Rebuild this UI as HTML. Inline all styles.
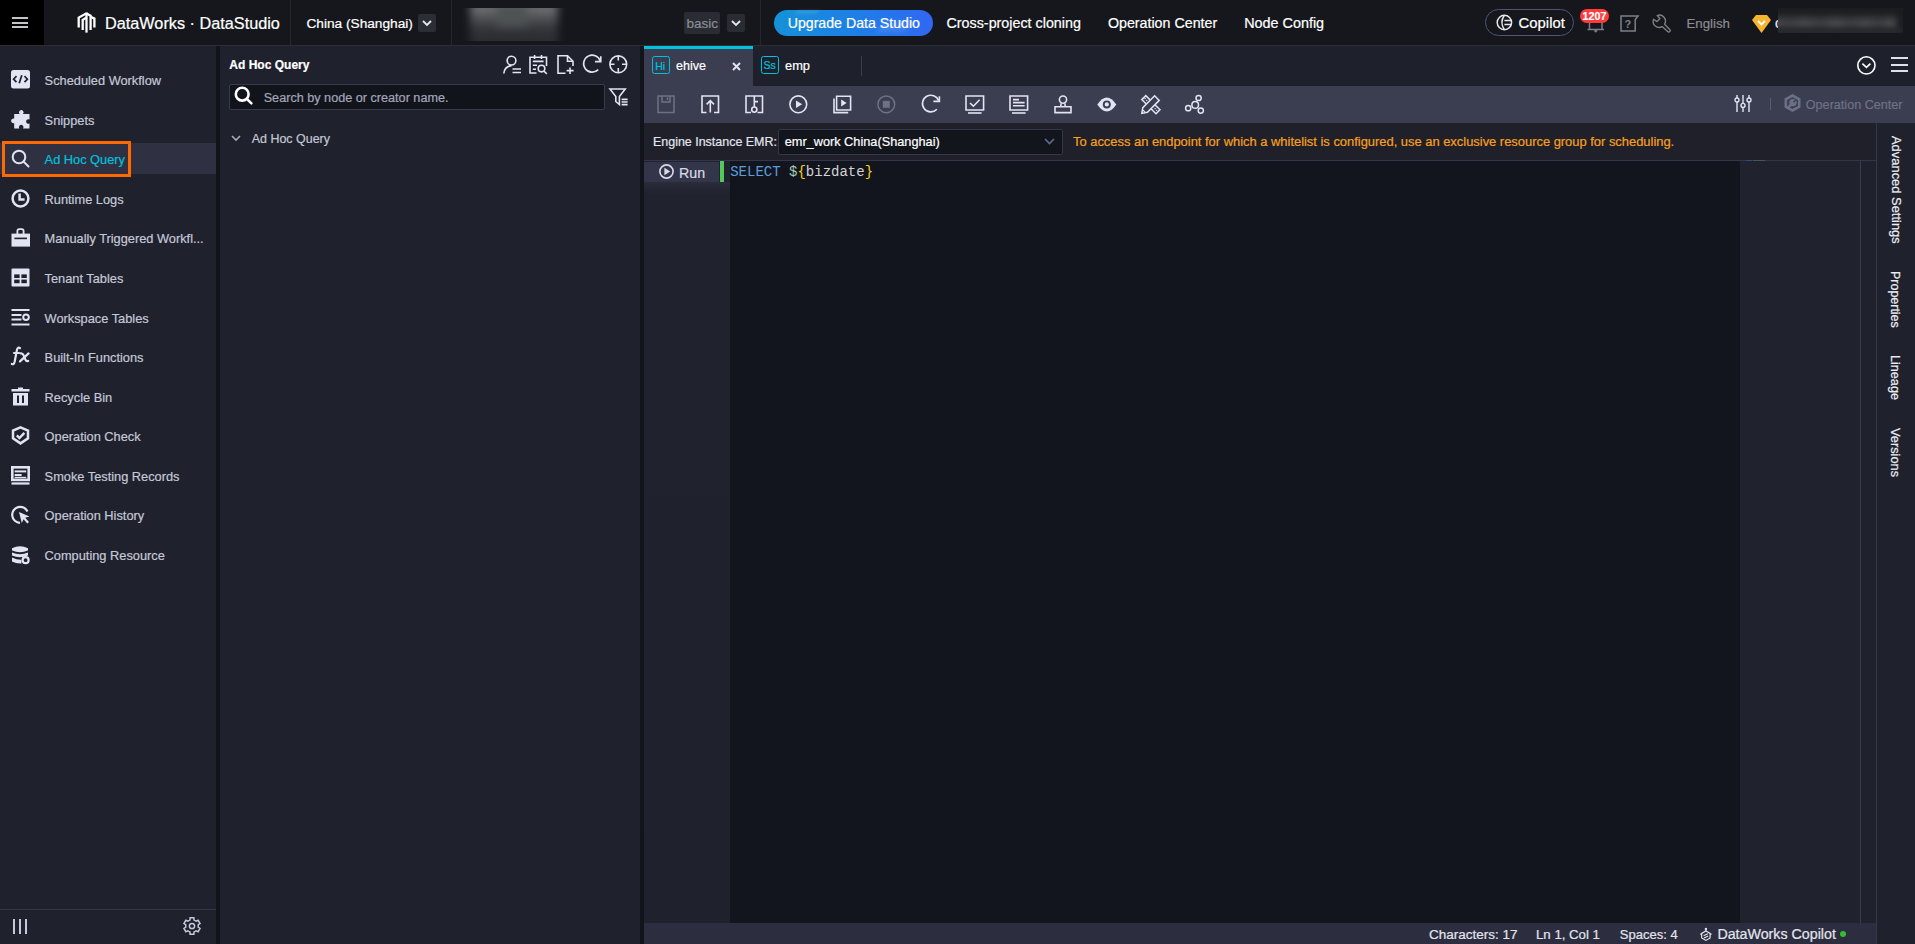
<!DOCTYPE html>
<html><head><meta charset="utf-8">
<style>
*{box-sizing:border-box;margin:0;padding:0}
html,body{width:1915px;height:944px;overflow:hidden;background:#1f212c;font-family:"Liberation Sans",sans-serif}
.a{position:absolute}
svg.a{display:block;overflow:visible}
.t{position:absolute;white-space:nowrap;line-height:1;-webkit-text-stroke:0.2px currentColor}
</style></head><body>
<div class="a" style="left:0px;top:0px;width:1915px;height:45px;background:#15171c;"></div>
<div class="a" style="left:0px;top:45px;width:1915px;height:1px;background:#2c2e33;"></div>
<div class="a" style="left:0px;top:0px;width:44px;height:45px;background:#000000;"></div>
<div class="a" style="left:12px;top:17px;width:16px;height:2px;background:#c2c4c9;"></div>
<div class="a" style="left:12px;top:21.5px;width:16px;height:2px;background:#c2c4c9;"></div>
<div class="a" style="left:12px;top:26px;width:16px;height:2px;background:#c2c4c9;"></div>
<svg class="a" style="left:72px;top:8px;" width="30" height="30" viewBox="0 0 30 30"><g fill="none" stroke="#ffffff" stroke-width="2.3" stroke-linejoin="miter" stroke-linecap="butt">
<path d="M6.7 19.6 V9.6 L14.2 5.6"/><path d="M10.7 22 V11.8 L14.2 9.8"/><path d="M14.5 24.6 V4.6"/><path d="M14.2 5.4 L18.6 7.6 V22"/><path d="M18.6 8.8 L22.4 10.6 V19.6"/></g></svg>
<div class="t" style="left:105px;top:15px;font-size:16.26px;color:#ffffff;font-weight:normal;">DataWorks · DataStudio</div>
<div class="a" style="left:290px;top:0px;width:1px;height:45px;background:#25272c;"></div>
<div class="t" style="left:306.4px;top:17px;font-size:13.7px;color:#ffffff;font-weight:normal;">China (Shanghai)</div>
<div class="a" style="left:418px;top:14px;width:18px;height:18px;background:#2c2e36;border-radius:2px;"></div>
<svg class="a" style="left:422px;top:19px;" width="10" height="8" viewBox="0 0 10 8"><path d="M1 2 L5 6 L9 2" fill="none" stroke="#e8e8ea" stroke-width="1.8"/></svg>
<div class="a" style="left:451px;top:0px;width:1px;height:45px;background:#25272c;"></div>
<div class="a" style="left:462px;top:8px;width:105px;height:33px;overflow:hidden"><div class="a" style="left:8px;top:-6px;width:88px;height:45px;background:linear-gradient(180deg,#747378 0%,#6a6a6e 18%,#4a4b4f 40%,#303236 62%,#2a2c30 100%);filter:blur(4px)"></div><div class="a" style="left:35px;top:-4px;width:30px;height:22px;background:#4e5254;filter:blur(5px)"></div></div>
<div class="a" style="left:684px;top:12px;width:36px;height:22px;background:#2a2c33;border-radius:2px;"></div>
<div class="t" style="left:686.6px;top:17px;font-size:13.48px;color:#8b8d93;font-weight:normal;">basic</div>
<div class="a" style="left:727px;top:14px;width:18px;height:18px;background:#2a2c33;border-radius:2px;"></div>
<svg class="a" style="left:731px;top:19px;" width="10" height="8" viewBox="0 0 10 8"><path d="M1 2 L5 6 L9 2" fill="none" stroke="#e8e8ea" stroke-width="1.8"/></svg>
<div class="a" style="left:760px;top:0px;width:1px;height:45px;background:#25272c;"></div>
<div class="a" style="left:774px;top:10px;width:159px;height:26px;background:linear-gradient(90deg,#1592d8 0%,#1e7fe6 50%,#3068f2 100%);border-radius:13px;"></div>
<div class="a" style="left:796px;top:10px;width:22px;height:4px;background:rgba(255,255,255,0.10);transform:skewX(-30deg);filter:blur(1.5px);"></div>
<div class="a" style="left:880px;top:22px;width:28px;height:10px;background:rgba(255,255,255,0.10);transform:skewX(-35deg);filter:blur(2px);"></div>
<div class="t" style="left:787.7px;top:16px;font-size:14.16px;color:#ffffff;font-weight:normal;">Upgrade Data Studio</div>
<div class="t" style="left:946.5px;top:16px;font-size:14.32px;color:#ffffff;font-weight:normal;">Cross-project cloning</div>
<div class="t" style="left:1107.9px;top:16px;font-size:14.26px;color:#ffffff;font-weight:normal;">Operation Center</div>
<div class="t" style="left:1244.2px;top:16px;font-size:14.39px;color:#ffffff;font-weight:normal;">Node Config</div>
<div class="a" style="left:1485px;top:9px;width:89px;height:27px;background:transparent;border:1.3px solid #4d5478;border-radius:14px;"></div>
<svg class="a" style="left:1496px;top:14px;" width="17" height="17" viewBox="0 0 17 17"><g fill="none" stroke="#e6e7ea" stroke-width="1.5"><circle cx="8.4" cy="8.5" r="7.2"/><path d="M8.4 6.4 H15.4 M8.4 10.6 H15.4"/><path d="M8.4 1.3 Q3.4 8.5 8.4 15.7"/></g></svg>
<div class="t" style="left:1518.6px;top:16px;font-size:14.86px;color:#ffffff;font-weight:normal;">Copilot</div>
<svg class="a" style="left:1587px;top:20px;" width="18" height="12" viewBox="0 0 18 12"><g fill="none" stroke="#7d7f88" stroke-width="1.5"><path d="M2.5 0 V9.6 M15 0 V9.6 M0.5 9.6 H17"/><path d="M7.6 10.4 L8.8 11.6 L10 10.4"/></g></svg>
<div class="a" style="left:1580.4px;top:8.7px;width:28.5px;height:14.3px;background:#ff3b3b;border-radius:7.2px;"></div>
<div class="t" style="left:1582.6px;top:11px;font-size:10.7px;color:#ffffff;font-weight:bold;">1207</div>
<svg class="a" style="left:1619.5px;top:14.5px;" width="19" height="17" viewBox="0 0 19 17"><g fill="none" stroke="#7d7f88" stroke-width="1.5"><path d="M1 1 H18 L15.2 4.6 V16 H1 Z"/></g><text x="4.6" y="13" font-family="Liberation Sans" font-weight="bold" font-size="11" fill="#7d7f88">?</text></svg>
<svg class="a" style="left:1652px;top:14px;" width="19" height="19" viewBox="0 0 19 19"><path fill="none" stroke="#7d7f88" stroke-width="1.4" stroke-linejoin="round" d="M1.6 5.2 A6 6 0 0 0 10.2 12.6 L15.6 17.6 A1.5 1.5 0 0 0 17.8 15.4 L12.6 10.2 A6 6 0 0 0 5.2 1.6 L8 4.6 L5 7.6 Z"/></svg>
<div class="t" style="left:1686.5px;top:17px;font-size:13.26px;color:#8b8d93;font-weight:normal;">English</div>
<svg class="a" style="left:1752px;top:15px;" width="19" height="18" viewBox="0 0 19 18"><path d="M4 0 H15 L19 5 L9.5 18 L0 5 Z" fill="#f6b52e"/><path d="M6 6 L9.5 9.5 L13 6" fill="none" stroke="#fff" stroke-width="1.8"/></svg>
<div class="a" style="left:1771px;top:14px;width:7px;height:18px;overflow:hidden"><div class="t" style="left:4px;top:2px;font-size:14px;color:#e8f2ff">c</div></div>
<div class="a" style="left:1778px;top:8px;width:125px;height:25px;overflow:hidden;background:#1c1d21"><div class="a" style="left:-8px;top:9px;width:126px;height:13px;background:linear-gradient(90deg,#4a4a4e 0%,#3c3d40 15%,#46474a 28%,#3a3b3e 40%,#48494c 52%,#3b3c3f 64%,#46474a 76%,#3a3b3e 86%,#4a4a4d 96%);filter:blur(3.5px)"></div><div class="a" style="left:0;top:20px;width:125px;height:5px;background:#28292c;filter:blur(2px)"></div></div>
<div class="a" style="left:0px;top:46px;width:216px;height:898px;background:#1f212c;"></div>
<div class="a" style="left:216px;top:46px;width:4px;height:898px;background:#12141b;"></div>
<div class="a" style="left:220px;top:46px;width:420px;height:898px;background:#1f212c;"></div>
<div class="a" style="left:640px;top:46px;width:4px;height:898px;background:#12141b;"></div>
<div class="a" style="left:0px;top:143px;width:216px;height:31px;background:#2f3142;"></div>
<svg class="a" style="left:11px;top:70px;" width="19" height="19" viewBox="0 0 19 19"><rect x="0" y="0" width="19" height="18.5" rx="2.5" fill="#e1e4f2"/><g fill="none" stroke="#1f212c" stroke-width="1.7"><path d="M5.5 6.2 L2.6 9.2 L5.5 12.2"/><path d="M13.5 6.2 L16.4 9.2 L13.5 12.2"/><path d="M10.8 5.2 L8.2 13.2"/></g></svg>
<div class="t" style="left:44.6px;top:75px;font-size:12.81px;color:#c5c8d8;font-weight:normal;">Scheduled Workflow</div>
<svg class="a" style="left:11px;top:110px;" width="19" height="19" viewBox="0 0 19 19"><path fill="#e1e4f2" d="M6 4 H8.6 A2.3 2.3 0 1 1 12 4 H18.5 V9.5 A2.3 2.3 0 1 0 18.5 13.6 V18.5 H12 A2.3 2.3 0 1 0 8.4 18.5 H3.2 V13.2 A2.4 2.4 0 1 1 3.2 8.6 V4 Z"/></svg>
<div class="t" style="left:44.6px;top:115px;font-size:12.81px;color:#c5c8d8;font-weight:normal;">Snippets</div>
<svg class="a" style="left:11px;top:149px;" width="19" height="19" viewBox="0 0 19 19"><g fill="none" stroke="#e1e4f2" stroke-width="2"><circle cx="8" cy="8" r="6.3"/><path d="M12.6 12.6 L17.5 17.5" stroke-linecap="round"/></g></svg>
<div class="t" style="left:44.6px;top:154px;font-size:12.81px;color:#00c1de;font-weight:normal;">Ad Hoc Query</div>
<svg class="a" style="left:11px;top:189px;" width="19" height="19" viewBox="0 0 19 19"><g fill="none" stroke="#e1e4f2" stroke-width="2.5"><circle cx="9.5" cy="9.5" r="7.9"/><path d="M8.6 4.6 V10.4 H13.6"/></g></svg>
<div class="t" style="left:44.6px;top:194px;font-size:12.81px;color:#c5c8d8;font-weight:normal;">Runtime Logs</div>
<svg class="a" style="left:11px;top:228px;" width="19" height="19" viewBox="0 0 19 19"><path fill="none" stroke="#e1e4f2" stroke-width="1.8" d="M6.4 6 V3 Q6.4 1.2 8.2 1.2 H10.8 Q12.6 1.2 12.6 3 V6"/><rect x="0.5" y="5.6" width="18.5" height="13" fill="#e1e4f2"/><rect x="3.4" y="9.6" width="12.6" height="1.6" fill="#1f212c"/></svg>
<div class="t" style="left:44.6px;top:233px;font-size:12.81px;color:#c5c8d8;font-weight:normal;">Manually Triggered Workfl...</div>
<svg class="a" style="left:11px;top:268px;" width="19" height="19" viewBox="0 0 19 19"><rect x="0.5" y="0.5" width="18" height="18" rx="1" fill="#e1e4f2"/><g fill="#1f212c"><rect x="3.2" y="6.4" width="5.4" height="3.6"/><rect x="10.4" y="6.4" width="5.4" height="3.6"/><rect x="3.2" y="11.6" width="5.4" height="3.6"/><rect x="10.4" y="11.6" width="5.4" height="3.6"/></g></svg>
<div class="t" style="left:44.6px;top:273px;font-size:12.81px;color:#c5c8d8;font-weight:normal;">Tenant Tables</div>
<svg class="a" style="left:11px;top:308px;" width="19" height="19" viewBox="0 0 19 19"><g fill="#e1e4f2"><rect x="0.5" y="1" width="18" height="2"/><rect x="0.5" y="6" width="10" height="2"/><rect x="0.5" y="10.5" width="10" height="2"/><rect x="0.5" y="15.5" width="18" height="2"/></g><circle cx="15" cy="9.3" r="2.8" fill="none" stroke="#e1e4f2" stroke-width="2"/></svg>
<div class="t" style="left:44.6px;top:313px;font-size:12.81px;color:#c5c8d8;font-weight:normal;">Workspace Tables</div>
<svg class="a" style="left:11px;top:347px;" width="19" height="19" viewBox="0 0 19 19"><g fill="none" stroke="#e1e4f2" stroke-width="2.2" stroke-linecap="round"><path d="M9 1.2 Q7 -0.4 6 2.6 L3.6 15 Q2.8 18 0.8 17"/><path d="M3 6 H8"/><path d="M9.6 6.4 Q11.6 6 12.6 8.4 L14.4 12.6 Q15.2 14.6 17.2 14"/><path d="M17.6 6.4 L9 14.4"/></g></svg>
<div class="t" style="left:44.6px;top:352px;font-size:12.81px;color:#c5c8d8;font-weight:normal;">Built-In Functions</div>
<svg class="a" style="left:11px;top:387px;" width="19" height="19" viewBox="0 0 19 19"><path fill="#e1e4f2" d="M7 0.5 H12 V2 H18.5 V4.5 H0.5 V2 H7 Z M2 6 H17 V18.5 H2 Z"/><g fill="#1f212c"><rect x="6" y="8.5" width="2" height="7.5"/><rect x="11" y="8.5" width="2" height="7.5"/></g></svg>
<div class="t" style="left:44.6px;top:392px;font-size:12.81px;color:#c5c8d8;font-weight:normal;">Recycle Bin</div>
<svg class="a" style="left:11px;top:426px;" width="19" height="19" viewBox="0 0 19 19"><path fill="none" stroke="#e1e4f2" stroke-width="2.5" d="M9.5 1.4 L17 4.6 V12.4 L9.5 17.4 L2 12.4 V4.6 Z"/><path d="M5.8 9.4 L8.4 12 L13.4 6.8" fill="none" stroke="#e1e4f2" stroke-width="2.4"/></svg>
<div class="t" style="left:44.6px;top:431px;font-size:12.81px;color:#c5c8d8;font-weight:normal;">Operation Check</div>
<svg class="a" style="left:11px;top:466px;" width="19" height="19" viewBox="0 0 19 19"><rect x="1.3" y="1.3" width="16.4" height="12.6" fill="none" stroke="#e1e4f2" stroke-width="2.6"/><rect x="0.5" y="16.4" width="18" height="2.2" fill="#e1e4f2"/><g fill="#e1e4f2"><rect x="3.6" y="4.4" width="11.6" height="2"/><rect x="3.6" y="8" width="7" height="2"/><rect x="3.6" y="10.8" width="11.6" height="1.4"/></g></svg>
<div class="t" style="left:44.6px;top:471px;font-size:12.81px;color:#c5c8d8;font-weight:normal;">Smoke Testing Records</div>
<svg class="a" style="left:11px;top:505px;" width="19" height="19" viewBox="0 0 19 19"><path fill="none" stroke="#e1e4f2" stroke-width="2.2" d="M16.5 6.5 A8 8 0 1 0 9 17.8"/><path fill="#e1e4f2" d="M8 7 L18.5 11.5 L14.2 12.8 L18 17 L16.3 18.6 L12.6 14.3 L10.8 18 Z"/></svg>
<div class="t" style="left:44.6px;top:510px;font-size:12.81px;color:#c5c8d8;font-weight:normal;">Operation History</div>
<svg class="a" style="left:11px;top:545px;" width="19" height="19" viewBox="0 0 19 19"><g fill="#e1e4f2"><path d="M1 3.2 Q9 -0.8 17 3.2 V5.4 Q9 9 1 5.4 Z"/><path d="M1 7.4 Q9 11 17 7.4 V10.6 Q9 14 1 10.6 Z"/><path d="M1 12.6 Q6 15 10.4 14.8 V18.4 Q5 18.6 1 16.4 Z"/></g><circle cx="14.6" cy="15.2" r="3" fill="#1f212c" stroke="#e1e4f2" stroke-width="2.2"/></svg>
<div class="t" style="left:44.6px;top:550px;font-size:12.81px;color:#c5c8d8;font-weight:normal;">Computing Resource</div>
<div class="a" style="left:2px;top:141px;width:129px;height:36px;background:transparent;border:3px solid #ff6a00;"></div>
<div class="a" style="left:0px;top:909px;width:216px;height:1px;background:#34364a;"></div>
<div class="a" style="left:13px;top:919px;width:2px;height:15px;background:#c5c8d8;"></div>
<div class="a" style="left:19px;top:919px;width:2px;height:15px;background:#c5c8d8;"></div>
<div class="a" style="left:25px;top:919px;width:2px;height:15px;background:#c5c8d8;"></div>
<svg class="a" style="left:183px;top:917px;" width="18" height="18" viewBox="0 0 18 18"><g fill="none" stroke="#c5c8d8" stroke-width="1.5" stroke-linejoin="miter"><path d="M15.30 9.00 L15.18 10.20 L17.03 11.46 L15.14 14.73 L13.13 13.75 L12.15 14.46 L11.05 14.96 L10.89 17.18 L7.11 17.18 L6.95 14.96 L5.85 14.46 L4.87 13.75 L2.86 14.73 L0.97 11.46 L2.82 10.20 L2.70 9.00 L2.82 7.80 L0.97 6.54 L2.86 3.27 L4.87 4.25 L5.85 3.54 L6.95 3.04 L7.11 0.82 L10.89 0.82 L11.05 3.04 L12.15 3.54 L13.13 4.25 L15.14 3.27 L17.03 6.54 L15.18 7.80 Z"/><circle cx="9" cy="9" r="2.6"/></g></svg>
<div class="t" style="left:229.3px;top:59px;font-size:12.02px;color:#ffffff;font-weight:bold;">Ad Hoc Query</div>
<svg class="a" style="left:503px;top:55px;" width="19" height="19" viewBox="0 0 19 19"><g fill="none" stroke="#e1e4f2" stroke-width="1.6"><circle cx="8.5" cy="5.6" r="4.4"/><path d="M0.8 18.5 Q1.5 11.5 8.5 10.6"/><path d="M9.5 14 H18 M9.5 17.5 H18"/></g></svg>
<svg class="a" style="left:529px;top:55px;" width="19" height="19" viewBox="0 0 19 19"><g fill="none" stroke="#e1e4f2" stroke-width="1.6"><path d="M7.5 18 H1 V2.2 H17.5 V11"/><path d="M5.6 0 V4 M12.5 0 V4"/><path d="M3.8 6.4 H14.6 M3.8 10.2 H8 M3.8 14.2 H7"/><circle cx="12.5" cy="13.6" r="3.3"/><path d="M14.8 16 L17.8 18.8"/></g></svg>
<svg class="a" style="left:557px;top:55px;" width="19" height="19" viewBox="0 0 19 19"><g fill="none" stroke="#e1e4f2" stroke-width="1.6"><path d="M8.5 18.2 H1 V0.8 H10.5 L16 6.3 V11"/><path d="M10.5 0.8 V6.3 H16"/><path d="M13 12.5 V19 M9.6 15.6 H16.6"/></g></svg>
<svg class="a" style="left:582px;top:55px;" width="19" height="19" viewBox="0 0 19 19"><g fill="none" stroke="#e1e4f2" stroke-width="1.6"><path d="M16.2 14.6 A8.5 8.5 0 1 1 18.2 6"/><path d="M13 6.6 H18.8 V1.3"/></g></svg>
<svg class="a" style="left:608.6px;top:55px;" width="19" height="19" viewBox="0 0 19 19"><g fill="none" stroke="#e1e4f2" stroke-width="1.6"><circle cx="9.3" cy="9.3" r="8.4"/><path d="M9.3 1 V5.5 M9.3 13 V17.6 M1 9.3 H5.5 M13 9.3 H17.6"/></g></svg>
<div class="a" style="left:229px;top:84px;width:376px;height:26px;background:#12141c;border:1px solid #3a3c4e;border-radius:2px;"></div>
<svg class="a" style="left:234px;top:86.2px;" width="19" height="19" viewBox="0 0 19 19"><g fill="none" stroke="#ffffff" stroke-width="2.6"><circle cx="8.2" cy="8.2" r="6.4"/><path d="M12.8 12.8 L17.4 17.4" stroke-linecap="round"/></g></svg>
<div class="t" style="left:263.7px;top:92px;font-size:12.65px;color:#a3a6b9;font-weight:normal;">Search by node or creator name.</div>
<svg class="a" style="left:609px;top:88px;" width="19" height="18" viewBox="0 0 19 18"><g fill="none" stroke="#e1e4f2" stroke-width="1.6"><path d="M1 1 H16.2 L10.4 8.5 V16.5 L6.8 13.5 V8.5 Z"/><path d="M12.6 11.4 H18.6 M12.6 14 H18.6 M12.6 16.6 H18.6"/></g></svg>
<svg class="a" style="left:231px;top:134.5px;" width="10" height="7" viewBox="0 0 10 7"><path d="M1 1 L5 5 L9 1" fill="none" stroke="#a6a9bb" stroke-width="1.6"/></svg>
<div class="t" style="left:251.8px;top:133px;font-size:12.45px;color:#c5c8d8;font-weight:normal;">Ad Hoc Query</div>
<div class="a" style="left:644px;top:46px;width:1271px;height:40px;background:#1e202b;"></div>
<div class="a" style="left:644px;top:46px;width:109px;height:40px;background:#3b3d51;"></div>
<div class="a" style="left:644px;top:46px;width:109px;height:3px;background:#00c1de;"></div>
<div class="a" style="left:652.2px;top:56px;width:18px;height:18px;background:transparent;border:1.9px solid #00c1de;border-radius:2.5px;"></div>
<div class="t" style="left:655.2px;top:61px;font-size:10.5px;color:#00c1de;font-weight:normal;">Hi</div>
<div class="t" style="left:676px;top:60px;font-size:12.55px;color:#ffffff;font-weight:normal;">ehive</div>
<svg class="a" style="left:732px;top:62px;" width="9" height="9" viewBox="0 0 9 9"><path d="M1 1 L8 8 M8 1 L1 8" stroke="#e2e3ea" stroke-width="2"/></svg>
<div class="a" style="left:761px;top:56px;width:18px;height:18px;background:transparent;border:1.9px solid #00c1de;border-radius:2.5px;"></div>
<div class="t" style="left:763.4px;top:60px;font-size:10.5px;color:#00c1de;font-weight:normal;">Ss</div>
<div class="t" style="left:785px;top:60px;font-size:12.82px;color:#ffffff;font-weight:normal;">emp</div>
<div class="a" style="left:861px;top:56px;width:1px;height:20px;background:#3b3d4a;"></div>
<svg class="a" style="left:1857px;top:56px;" width="19" height="19" viewBox="0 0 19 19"><g fill="none" stroke="#ffffff" stroke-width="1.6"><circle cx="9.4" cy="9.4" r="8.6"/><path d="M5.4 7.6 L9.4 11.4 L13.4 7.6"/></g></svg>
<div class="a" style="left:1891px;top:57px;width:17px;height:2px;background:#dfe1ea;"></div>
<div class="a" style="left:1891px;top:63.599999999999994px;width:17px;height:2px;background:#dfe1ea;"></div>
<div class="a" style="left:1891px;top:70.2px;width:17px;height:2px;background:#dfe1ea;"></div>
<div class="a" style="left:644px;top:86px;width:1271px;height:37px;background:#3b3d51;"></div>
<svg class="a" style="left:657px;top:95px;" width="19" height="19" viewBox="0 0 19 19"><g fill="none" stroke="#6e7183" stroke-width="1.5"><path d="M1 1 H17 V17.5 H1 Z"/><path d="M5 1 V7 H13 V1"/><path d="M10.5 2.5 V5"/></g></svg>
<svg class="a" style="left:701px;top:95px;" width="19" height="19" viewBox="0 0 19 19"><g fill="none" stroke="#e1e4f2" stroke-width="1.6"><path d="M5.5 17.5 H1 V1 H17.5 V17.5 H13"/><path d="M9.3 17.5 V5.8 M5.6 9.4 L9.3 5.6 L13 9.4"/></g></svg>
<svg class="a" style="left:745px;top:95px;" width="19" height="19" viewBox="0 0 19 19"><g fill="none" stroke="#e1e4f2" stroke-width="1.6"><path d="M6 17.5 H1 V1 H17.5 V17.5 H12.5"/><path d="M9.3 1 V11.8 M9.3 6.6 H13"/><circle cx="9.3" cy="14.6" r="2.6"/></g></svg>
<svg class="a" style="left:789px;top:95px;" width="19" height="19" viewBox="0 0 19 19"><g fill="none" stroke="#e1e4f2" stroke-width="1.6"><circle cx="9.3" cy="9.3" r="8.4"/></g><path d="M7 5.5 L13.2 9.3 L7 13.1 Z" fill="#e1e4f2"/></svg>
<svg class="a" style="left:833px;top:95px;" width="19" height="19" viewBox="0 0 19 19"><g fill="none" stroke="#e1e4f2" stroke-width="1.6"><path d="M3.6 1.2 H17.6 V15 H3.6 Z"/><path d="M1 3.6 V17.6 H15.2"/></g><path d="M8.2 4.6 L13.6 8.1 L8.2 11.6 Z" fill="#e1e4f2"/></svg>
<svg class="a" style="left:877px;top:95px;" width="19" height="19" viewBox="0 0 19 19"><g fill="none" stroke="#6e7183" stroke-width="1.5"><circle cx="9.3" cy="9.3" r="8.4"/></g><rect x="5.8" y="5.8" width="7" height="7" fill="#6e7183"/></svg>
<svg class="a" style="left:921px;top:95px;" width="19" height="19" viewBox="0 0 19 19"><g fill="none" stroke="#e1e4f2" stroke-width="1.6"><path d="M15.9 14.2 A8.3 8.3 0 1 1 17.6 5.8"/><path d="M12.4 6.4 H18.4 V1.2"/></g></svg>
<svg class="a" style="left:965px;top:95px;" width="19" height="19" viewBox="0 0 19 19"><g fill="none" stroke="#e1e4f2" stroke-width="1.6"><path d="M1 1 H18.6 V15 H1 Z"/><path d="M3 18 H16.6"/><path d="M5 8 L8.4 11.2 L14.6 4.8"/></g></svg>
<svg class="a" style="left:1009px;top:95px;" width="19" height="19" viewBox="0 0 19 19"><g fill="none" stroke="#e1e4f2" stroke-width="1.6"><path d="M1 1 H18.6 V15 H1 Z"/><path d="M3 18 H16.6"/><path d="M4 4.6 H10 M4 7.6 H15.6 M4 10.8 H15.6"/></g></svg>
<svg class="a" style="left:1053.6px;top:95px;" width="19" height="19" viewBox="0 0 19 19"><g fill="none" stroke="#e1e4f2" stroke-width="1.6"><circle cx="9" cy="4.6" r="3.6"/><path d="M7.2 8.4 L6.6 11.6 M10.8 8.4 L11.4 11.6"/><path d="M1 11.8 H17 V17.6 H1 Z"/></g></svg>
<svg class="a" style="left:1096.5px;top:95px;" width="19" height="19" viewBox="0 0 19 19"><path d="M0.3 9.4 Q9.8 -4.6 19.3 9.4 Q9.8 23.4 0.3 9.4 Z" fill="#e1e4f2"/><circle cx="9.8" cy="9.4" r="4" fill="#3b3d51"/><circle cx="9.8" cy="9.4" r="2.1" fill="#e1e4f2"/></svg>
<svg class="a" style="left:1140.6px;top:95px;" width="19" height="19" viewBox="0 0 19 19"><g stroke="#e1e4f2" stroke-width="1.5" stroke-linejoin="miter"><path d="M0.8 4.6 L4.8 0.6 L19 14.8 L15 18.8 Z" fill="none"/><path d="M3.6 4.2 L4.6 3.2 M5.2 5.8 L6.2 4.8 M13.6 14.2 L14.6 13.2 M15.2 15.8 L16.2 14.8" fill="none" stroke-width="1.1"/><path d="M13.6 0.8 L18.2 5.4 L6.4 17.2 L0.8 18.4 L1.8 12.6 Z" fill="#3b3d51"/><path d="M2 15.2 L4 17.2" fill="none" stroke-width="1.2"/></g></svg>
<svg class="a" style="left:1184.8px;top:95px;" width="19" height="19" viewBox="0 0 19 19"><g fill="none" stroke="#e1e4f2" stroke-width="1.5"><circle cx="10.2" cy="9.9" r="3.3"/><circle cx="13.6" cy="3" r="2.6"/><circle cx="3.2" cy="13.2" r="2.6"/><circle cx="15.8" cy="15.6" r="2.6"/></g></svg>
<svg class="a" style="left:1734px;top:95px;" width="18" height="17" viewBox="0 0 18 17"><g fill="none" stroke="#e1e4f2" stroke-width="1.4"><path d="M3 0 V17 M9 0 V17 M15 0 V17"/></g><g fill="#3b3d51" stroke="#e1e4f2" stroke-width="1.4"><circle cx="3" cy="5" r="2"/><circle cx="9" cy="10.4" r="2"/><circle cx="15" cy="5" r="2"/></g></svg>
<div class="a" style="left:1770px;top:98px;width:1px;height:12px;background:#5a5c70;"></div>
<svg class="a" style="left:1784px;top:94px;" width="17" height="18" viewBox="0 0 17 18"><path d="M8.5 1.5 L15.2 5.3 V12.7 L8.5 16.5 L1.8 12.7 V5.3 Z" fill="none" stroke="#6c7085" stroke-width="2.6"/><circle cx="9" cy="8.6" r="3.7" fill="#6c7085"/><path d="M9 8.6 L5 12.6" stroke="#6c7085" stroke-width="2.6" stroke-linecap="round"/><path d="M9.4 8.2 L12 5.6" stroke="#3b3d51" stroke-width="1.3"/></svg>
<div class="t" style="left:1805.8px;top:99px;font-size:12.62px;color:#6f7285;font-weight:normal;">Operation Center</div>
<div class="a" style="left:644px;top:123px;width:1232px;height:37px;background:#1f2029;"></div>
<div class="a" style="left:644px;top:160px;width:1232px;height:1px;background:#34364a;"></div>
<div class="t" style="left:653px;top:136px;font-size:12.46px;color:#e3e5ee;font-weight:normal;">Engine Instance EMR:</div>
<div class="a" style="left:778px;top:128.5px;width:285px;height:26px;background:#13151d;border:1px solid #34364a;border-radius:2px;"></div>
<div class="t" style="left:784.7px;top:136px;font-size:12.74px;color:#ffffff;font-weight:normal;">emr_work China(Shanghai)</div>
<svg class="a" style="left:1044px;top:138px;" width="11" height="7" viewBox="0 0 11 7"><path d="M1 1 L5.5 5.6 L10 1" fill="none" stroke="#5f6d8c" stroke-width="1.6"/></svg>
<div class="t" style="left:1073px;top:136px;font-size:12.92px;color:#f8a11f;font-weight:normal;">To access an endpoint for which a whitelist is configured, use an exclusive resource group for scheduling.</div>
<div class="a" style="left:644px;top:161px;width:86px;height:762px;background:linear-gradient(180deg,#20222e,#1f212c);"></div>
<div class="a" style="left:730px;top:161px;width:1010px;height:762px;background:#13151e;"></div>
<div class="a" style="left:1740px;top:161px;width:120px;height:762px;background:#20222d;"></div>
<div class="a" style="left:1860px;top:161px;width:1px;height:762px;background:#3b3d4c;"></div>
<div class="a" style="left:1861px;top:161px;width:15px;height:762px;background:#1f212c;"></div>
<div class="a" style="left:644px;top:162px;width:75px;height:20px;background:#33354a;"></div>
<div class="a" style="left:644px;top:182px;width:86px;height:12px;background:linear-gradient(180deg,#2a2c3a,#20222e);"></div>
<svg class="a" style="left:658.8px;top:163.9px;" width="15" height="15" viewBox="0 0 15 15"><circle cx="7.5" cy="7.5" r="6.6" fill="none" stroke="#d9dbe4" stroke-width="1.6"/><path d="M5.4 3.8 L11.2 7.5 L5.4 11.2 Z" fill="#d9dbe4"/></svg>
<div class="t" style="left:679px;top:166px;font-size:14.21px;color:#d9dbe4;font-weight:normal;">Run</div>
<div class="a" style="left:720px;top:161px;width:4px;height:21px;background:#55c85a;"></div>
<div class="t" style="left:730.2px;top:164px;font-family:'Liberation Mono',monospace;font-size:14px;line-height:16px;-webkit-text-stroke:0"><span style="color:#5a9fdc">SELECT</span> <span style="color:#a9c7b7">$</span><span style="color:#f5d31a">{</span><span style="color:#d4d4d4">bizdate</span><span style="color:#f5d31a">}</span></div>
<div class="a" style="left:1746px;top:160px;width:6px;height:1px;background:#2a4f80;"></div>
<div class="a" style="left:1753px;top:160px;width:12px;height:1px;background:#4e505c;"></div>
<div class="a" style="left:1876px;top:123px;width:1px;height:821px;background:#34364a;"></div>
<div class="a" style="left:1877px;top:123px;width:38px;height:821px;background:#1f212c;"></div>
<div class="t" style="left:1901.55px;top:135.7px;font-size:12.93px;color:#eceef4;transform-origin:0 0;transform:rotate(90deg)">Advanced Settings</div>
<div class="t" style="left:1901.15px;top:271px;font-size:12.46px;color:#eceef4;transform-origin:0 0;transform:rotate(90deg)">Properties</div>
<div class="t" style="left:1901.30px;top:355px;font-size:12.64px;color:#eceef4;transform-origin:0 0;transform:rotate(90deg)">Lineage</div>
<div class="t" style="left:1901.44px;top:427.8px;font-size:12.81px;color:#eceef4;transform-origin:0 0;transform:rotate(90deg)">Versions</div>
<div class="a" style="left:644px;top:923px;width:1232px;height:21px;background:#2c2e40;"></div>
<div class="t" style="left:1429px;top:928px;font-size:13.49px;color:#e3e5ee;font-weight:normal;">Characters: 17</div>
<div class="t" style="left:1536px;top:928px;font-size:13.22px;color:#e3e5ee;font-weight:normal;">Ln 1, Col 1</div>
<div class="t" style="left:1619.8px;top:928px;font-size:13.03px;color:#e3e5ee;font-weight:normal;">Spaces: 4</div>
<svg class="a" style="left:1699px;top:927px;" width="14" height="14" viewBox="0 0 14 14"><g fill="none" stroke="#e3e5ee" stroke-width="1.2"><path d="M6.9 4 L11.1 6.4 V11 L6.9 13.4 L2.7 11 V6.4 Z"/><path d="M6.9 2.6 V4"/><path d="M1.2 7.2 H2.7 M11.1 7.2 H12.6"/><path d="M4.6 8.8 L8.8 6.8 M5 11 L9.2 9"/></g><circle cx="6.9" cy="1.9" r="1.2" fill="#e3e5ee"/></svg>
<div class="t" style="left:1717.4px;top:927px;font-size:14.25px;color:#e3e5ee;font-weight:normal;">DataWorks Copilot</div>
<div class="a" style="left:1840px;top:931px;width:6px;height:6px;background:#2ec02e;border-radius:3px;"></div>
</body></html>
